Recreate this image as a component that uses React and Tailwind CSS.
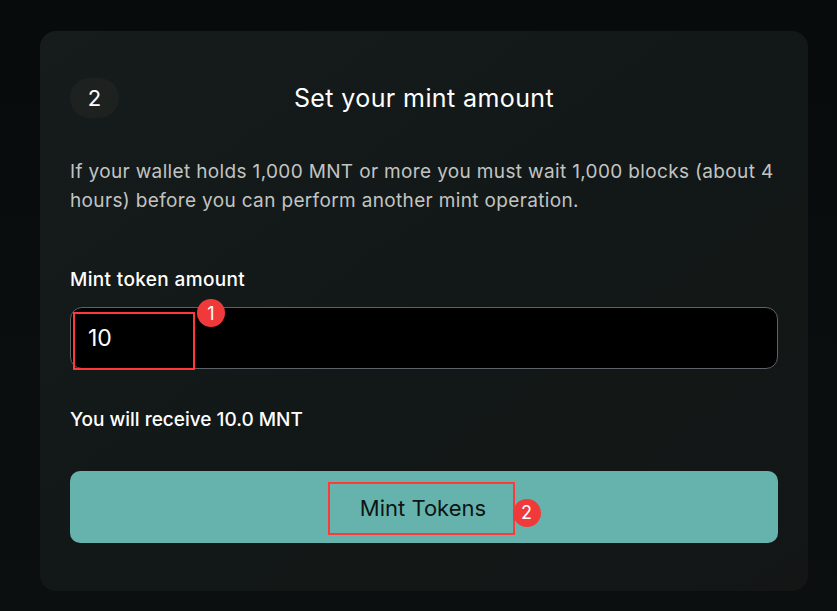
import React from "react";

export default function App() {
  return (
    <div
      className="w-[837px] h-[611px] overflow-hidden bg-gradient-to-b from-[#070b0b] to-[#0c0f0f] pt-[31px] pl-[40px]"
      style={{ fontFamily: "Inter, 'Noto Sans', sans-serif" }}
    >
      <div className="w-[768px] h-[560px] rounded-[16px] bg-gradient-to-br from-[#161c1b] via-[#111817] to-[#141616] px-[30px] pt-[47px] flex flex-col">
        <div className="grid grid-cols-[49px_1fr_49px] items-center h-[40px]">
          <div className="h-[40px] rounded-full bg-[#1d2221] flex items-center justify-center text-white text-[22px]">
            2
          </div>
          <div className="text-center text-white text-[25px] tracking-[0.4px] leading-[40px]">Set your mint amount</div>
          <div />
        </div>
        <p className="mt-[39px] text-[19px] tracking-[0.35px] leading-[29px] text-[#c2c4c3]">
          If your wallet holds 1,000 MNT or more you must wait 1,000 blocks (about 4 hours) before you can perform another mint operation.
        </p>
        <div className="mt-[53px] text-[19px] tracking-[0.35px] leading-[24px] text-white font-medium">Mint token amount</div>
        <div className="mt-[15px] relative h-[62px] rounded-[12px] bg-black border border-[#5d6168] flex items-center px-[17px] text-white text-[23px]">
          10
          <div className="absolute left-[2px] top-[4px] w-[122px] h-[58px] border-2 border-[#ff3838]" />
          <div className="absolute left-[126px] top-[-9px] w-[28px] h-[28px] rounded-full bg-[#f03a3a] text-white text-[18px] flex items-center justify-center">
            1
          </div>
        </div>
        <div className="mt-[39px] text-[19px] leading-[24px] text-white font-medium">You will receive 10.0 MNT</div>
        <div className="mt-[39px] h-[72px] rounded-[10px] bg-[#66b3ad] flex items-center justify-center">
          <div className="relative w-[187px] h-[53px] border-2 border-[#ff3838] flex items-center justify-center text-[22px] text-[#0d1514] mt-[2px] ml-[-6px]">
            <span className="ml-[4px]">Mint Tokens</span>
            <div className="absolute right-[-28px] top-[15px] w-[28px] h-[28px] rounded-full bg-[#f03a3a] text-white text-[18px] flex items-center justify-center">
              2
            </div>
          </div>
        </div>
      </div>
    </div>
  );
}
